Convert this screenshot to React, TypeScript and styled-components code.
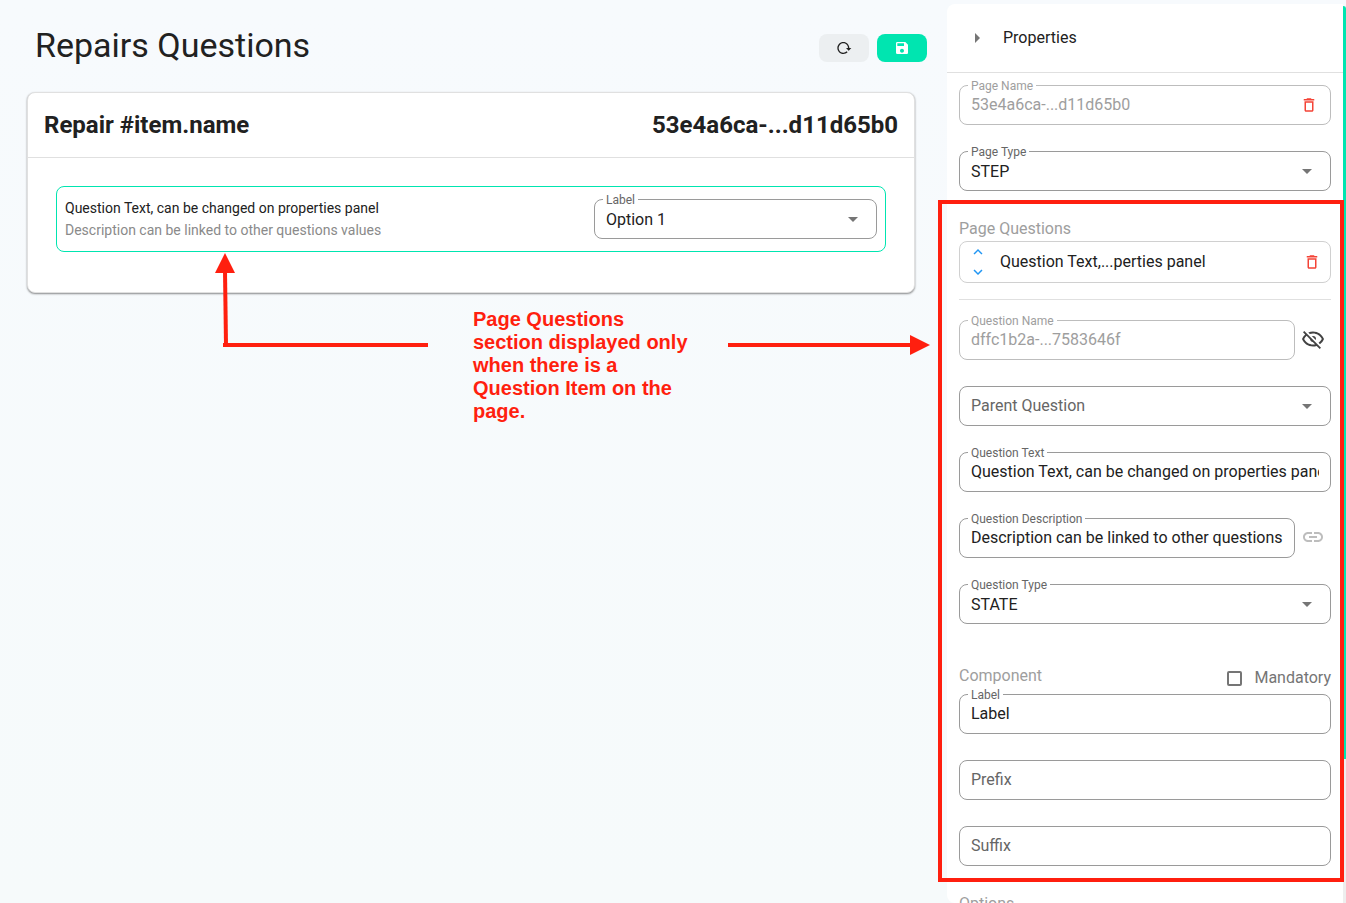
import React from 'react';
import styled, { createGlobalStyle } from 'styled-components';
import { MdSave, MdDeleteOutline, MdLink, MdArrowDropDown, MdArrowRight, MdKeyboardArrowUp, MdKeyboardArrowDown } from 'react-icons/md';

const RED = '#ff1f0f';
const MINT = '#00e5b0';

const GlobalStyle = createGlobalStyle`
  * { box-sizing: border-box; }
  body { margin: 0; color: #212121; font-family: Roboto, sans-serif; font-size: 16px; }
  button, input, select { font: inherit; color: inherit; }
  h1, h2, h3, p { margin: 0; font-weight: 400; }
`;

const Shell = styled.div`
  display: flex;
  height: 100vh;
  overflow: hidden;
  background: linear-gradient(#f7fafd, #f6fafb);
`;

const Main = styled.main`
  position: relative;
  flex: 1;
  min-width: 0;
  padding: 24px 20px 0 27px;
`;

const TitleRow = styled.header`
  display: flex;
  justify-content: space-between;
  align-items: flex-start;
  height: 68px;
  padding-left: 8px;
`;

const Title = styled.h1`
  font-size: 34px;
  line-height: 42px;
`;

const Actions = styled.div`
  display: flex;
  gap: 8px;
  padding-top: 10px;
`;

const ActionButton = styled.button<{ $primary?: boolean }>`
  display: flex;
  align-items: center;
  justify-content: center;
  width: 50px;
  height: 28px;
  padding: 0;
  border: 0;
  border-radius: 8px;
  background: ${(p) => (p.$primary ? MINT : '#eceff1')};
  color: ${(p) => (p.$primary ? '#fff' : '#212121')};
`;

const Card = styled.section`
  margin-right: 12px;
  border: 1px solid #e0e0e0;
  border-radius: 8px;
  background: #fff;
  box-shadow: 0 1px 2px rgba(0, 0, 0, 0.45);
`;

const CardHeader = styled.div`
  display: flex;
  justify-content: space-between;
  padding: 16px;
  border-bottom: 1px solid #e0e0e0;
`;

const CardTitle = styled.h2`
  font-size: 24px;
  line-height: 32px;
  font-weight: 700;
`;

const CardBody = styled.div`
  padding: 28px 28px 40px;
`;

const QuestionItem = styled.div`
  display: flex;
  justify-content: space-between;
  align-items: center;
  height: 66px;
  padding: 0 8px;
  border: 1px solid ${MINT};
  border-radius: 8px;
`;

const QuestionCopy = styled.div`
  font-size: 14px;
  line-height: 22px;
`;

const QuestionHint = styled.p`
  color: #8a8a8a;
`;

const QuestionControl = styled.div`
  width: 283px;
`;

const FieldBox = styled.div`
  position: relative;
  flex: 1;
  min-width: 0;
  height: 40px;
`;

const FieldLabel = styled.label<{ $muted?: boolean }>`
  position: absolute;
  top: -6px;
  left: 9px;
  padding: 0 3px;
  background: #fff;
  color: ${(p) => (p.$muted ? '#9e9e9e' : '#666')};
  font-size: 12px;
  line-height: 14px;
`;

const TextBox = styled.input`
  display: block;
  width: 100%;
  height: 40px;
  padding: 0 11px 2px;
  border: 1px solid #9a9a9a;
  border-radius: 8px;
  background: #fff;
  outline: none;
  &::placeholder { color: #666; opacity: 1; }
  &:disabled { border-color: #bdbdbd; color: #9e9e9e; }
`;

const SelectBox = styled.select<{ $empty?: boolean }>`
  display: block;
  width: 100%;
  height: 40px;
  padding: ${(p) => (p.$empty ? '0 36px 2px 11px' : '0 36px 0 11px')};
  border: 1px solid #9a9a9a;
  border-radius: 8px;
  background: #fff;
  appearance: none;
  outline: none;
  color: ${(p) => (p.$empty ? '#666' : '#212121')};
`;

const Adornment = styled.span`
  position: absolute;
  top: 8px;
  right: 12px;
  display: flex;
  color: #757575;
  pointer-events: none;
`;

const IconButton = styled.button<{ $color: string }>`
  display: flex;
  align-items: center;
  justify-content: center;
  padding: 0;
  border: 0;
  background: none;
  color: ${(p) => p.$color};
`;

const FieldAction = styled.div`
  position: absolute;
  top: 11px;
  right: 13px;
`;

const Panel = styled.aside`
  display: flex;
  flex-direction: column;
  width: 396px;
  margin-top: 4px;
  border-radius: 8px 0 0 8px;
  background: #fff;
`;

const PanelHeader = styled.div`
  display: flex;
  align-items: center;
  gap: 14px;
  flex: none;
  height: 69px;
  padding-left: 18px;
  border-bottom: 1px solid #e0e0e0;
`;

const PanelTitle = styled.h2`
  font-size: 16px;
  line-height: 24px;
`;

const PanelBody = styled.div`
  display: flex;
  flex-direction: column;
  padding: 12px 12px 0;
`;

const Stack = styled.div`
  display: flex;
  flex-direction: column;
  gap: 26px;
`;

const FieldRow = styled.div`
  display: flex;
  align-items: center;
  gap: 6px;
  padding-right: 6px;
  & > button { padding-bottom: 3px; }
`;

const HighlightedSection = styled.section`
  position: relative;
  margin-top: 28px;
  &::after {
    content: '';
    position: absolute;
    inset: -19px -13px -16px -21px;
    border: 4px solid ${RED};
    pointer-events: none;
  }
`;

const SectionTitle = styled.h3`
  color: #9e9e9e;
  font-size: 16px;
  line-height: 20px;
`;

const QuestionRow = styled.div`
  display: flex;
  align-items: center;
  height: 42px;
  margin-top: 2px;
  padding: 0 9px;
  border: 1px solid #d0d0d0;
  border-radius: 8px;
`;

const OrderButtons = styled.div`
  display: flex;
  flex-direction: column;
  align-items: flex-start;
  gap: 2px;
  width: 31px;
`;

const QuestionName = styled.span`
  flex: 1;
  padding-bottom: 1px;
`;

const Divider = styled.hr`
  width: 100%;
  margin: 16px 0 20px;
  border: 0;
  border-top: 1px solid #e0e0e0;
`;

const ComponentHeader = styled.div`
  display: flex;
  justify-content: space-between;
  align-items: flex-start;
  margin: 42px 0 6px;
`;

const CheckLabel = styled.label`
  display: flex;
  align-items: center;
  gap: 12px;
  padding-top: 2px;
  color: #757575;
  line-height: 20px;
`;

const CheckBox = styled.input`
  appearance: none;
  width: 15px;
  height: 15px;
  margin: 0;
  border: 2px solid #757575;
  border-radius: 2px;
`;

const NextSection = styled.div`
  margin-top: 28px;
`;

const ScrollTrack = styled.div`
  display: flex;
  width: 3px;
  flex: none;
  flex-direction: column;
  margin-top: 6px;
  background: #eee;
`;

const ScrollThumb = styled.div`
  height: 84%;
  border-radius: 0 3px 0 0;
  background: ${MINT};
`;

const Annotation = styled.div`
  position: absolute;
  top: 253px;
  left: 215px;
  display: flex;
  align-items: flex-start;
  color: ${RED};
  pointer-events: none;
`;

const AnnotationText = styled.p`
  width: 220px;
  margin: 55px 35px 0 45px;
  font-family: 'Liberation Sans', Arial, sans-serif;
  font-size: 20px;
  line-height: 23px;
  font-weight: 700;
`;

const ArrowRight = styled.svg`
  flex: none;
  margin-top: 81px;
`;

function ReloadIcon() {
  return (
    <svg width="16" height="16" viewBox="0 0 24 24" fill="currentColor" aria-hidden="true">
      <path d="M2 12C2 16.97 6.03 21 11 21C13.39 21 15.68 20.06 17.4 18.4L15.9 16.9C14.63 18.25 12.86 19 11 19C4.76 19 1.64 11.46 6.05 7.05C10.46 2.64 18 5.77 18 12H15L19 16H19.1L23 12H20C20 7.03 15.97 3 11 3C6.03 3 2 7.03 2 12Z" />
    </svg>
  );
}

function EyeOffIcon() {
  return (
    <svg width="24" height="24" viewBox="0 0 24 24" fill="currentColor" aria-hidden="true">
      <path d="M2,5.27L3.28,4L20,20.72L18.73,22L15.65,18.92C14.5,19.3 13.28,19.5 12,19.5C7,19.5 2.73,16.39 1,12C1.69,10.24 2.79,8.69 4.19,7.46L2,5.27M12,9A3,3 0 0,1 15,12C15,12.35 14.94,12.69 14.83,13L11,9.17C11.31,9.06 11.65,9 12,9M12,4.5C17,4.5 21.27,7.61 23,12C22.18,14.08 20.79,15.88 19,17.19L17.58,15.76C18.94,14.82 20.06,13.54 20.82,12C19.17,8.64 15.76,6.5 12,6.5C10.91,6.5 9.84,6.68 8.84,7L7.3,5.47C8.74,4.85 10.33,4.5 12,4.5M3.18,12C4.83,15.36 8.24,17.5 12,17.5C12.69,17.5 13.37,17.43 14,17.29L11.72,15C10.29,14.85 9.15,13.71 9,12.28L5.6,8.87C4.61,9.72 3.78,10.78 3.18,12Z" />
    </svg>
  );
}

type FieldProps = { id: string; label: string; value?: string; disabled?: boolean; children?: React.ReactNode };

function TextField({ id, label, value, disabled, children }: FieldProps) {
  return (
    <FieldBox>
      <TextBox id={id} defaultValue={value} disabled={disabled} placeholder={value ? undefined : label} aria-label={label} />
      {value && <FieldLabel htmlFor={id} $muted={disabled}>{label}</FieldLabel>}
      {children}
    </FieldBox>
  );
}

function SelectField({ id, label, value }: FieldProps) {
  return (
    <FieldBox>
      <SelectBox id={id} $empty={!value} aria-label={label}>
        <option>{value ?? label}</option>
      </SelectBox>
      {value && <FieldLabel htmlFor={id}>{label}</FieldLabel>}
      <Adornment><MdArrowDropDown size={24} /></Adornment>
    </FieldBox>
  );
}

export default function App() {
  return (
    <Shell>
      <GlobalStyle />
      <Main>
        <TitleRow>
          <Title>Repairs Questions</Title>
          <Actions>
            <ActionButton type="button" aria-label="Reload"><ReloadIcon /></ActionButton>
            <ActionButton type="button" $primary aria-label="Save"><MdSave size={16} /></ActionButton>
          </Actions>
        </TitleRow>
        <Card>
          <CardHeader>
            <CardTitle>Repair #item.name</CardTitle>
            <CardTitle>53e4a6ca-...d11d65b0</CardTitle>
          </CardHeader>
          <CardBody>
            <QuestionItem>
              <QuestionCopy>
                <p>Question Text, can be changed on properties panel</p>
                <QuestionHint>Description can be linked to other questions values</QuestionHint>
              </QuestionCopy>
              <QuestionControl>
                <SelectField id="preview" label="Label" value="Option 1" />
              </QuestionControl>
            </QuestionItem>
          </CardBody>
        </Card>
        <Annotation>
          <svg width="213" height="95" viewBox="0 0 213 95" aria-hidden="true">
            <path d="M10 18L11 92" fill="none" stroke="currentColor" strokeWidth="4" />
            <path d="M8 92H213" fill="none" stroke="currentColor" strokeWidth="4" />
            <path d="M10 0L20 20H0z" fill="currentColor" />
          </svg>
          <AnnotationText>Page Questions section displayed only when there is a Question Item on the page.</AnnotationText>
          <ArrowRight width="202" height="22" viewBox="0 0 202 22" aria-hidden="true">
            <path d="M0 11H184" stroke="currentColor" strokeWidth="4" />
            <path d="M182 1L202 11L182 21z" fill="currentColor" />
          </ArrowRight>
        </Annotation>
      </Main>
      <Panel>
        <PanelHeader>
          <IconButton type="button" $color="#757575" aria-label="Collapse properties"><MdArrowRight size={24} /></IconButton>
          <PanelTitle>Properties</PanelTitle>
        </PanelHeader>
        <PanelBody>
          <Stack>
            <TextField id="page-name" label="Page Name" value="53e4a6ca-...d11d65b0" disabled>
              <FieldAction>
                <IconButton type="button" $color="#f44336" aria-label="Delete page"><MdDeleteOutline size={18} /></IconButton>
              </FieldAction>
            </TextField>
            <SelectField id="page-type" label="Page Type" value="STEP" />
          </Stack>
          <HighlightedSection>
            <SectionTitle>Page Questions</SectionTitle>
            <QuestionRow>
              <OrderButtons>
                <IconButton type="button" $color="#2196f3" aria-label="Move up"><MdKeyboardArrowUp size={18} /></IconButton>
                <IconButton type="button" $color="#2196f3" aria-label="Move down"><MdKeyboardArrowDown size={18} /></IconButton>
              </OrderButtons>
              <QuestionName>Question Text,...perties panel</QuestionName>
              <IconButton type="button" $color="#f44336" aria-label="Delete question"><MdDeleteOutline size={18} /></IconButton>
            </QuestionRow>
            <Divider />
            <Stack>
              <FieldRow>
                <TextField id="question-name" label="Question Name" value="dffc1b2a-...7583646f" disabled />
                <IconButton type="button" $color="#424242" aria-label="Toggle visibility"><EyeOffIcon /></IconButton>
              </FieldRow>
              <SelectField id="parent-question" label="Parent Question" />
              <TextField id="question-text" label="Question Text" value="Question Text, can be changed on properties panel" />
              <FieldRow>
                <TextField id="question-description" label="Question Description" value="Description can be linked to other questions values" />
                <IconButton type="button" $color="#bdbdbd" aria-label="Link description"><MdLink size={24} /></IconButton>
              </FieldRow>
              <SelectField id="question-type" label="Question Type" value="STATE" />
            </Stack>
            <ComponentHeader>
              <SectionTitle>Component</SectionTitle>
              <CheckLabel><CheckBox type="checkbox" />Mandatory</CheckLabel>
            </ComponentHeader>
            <Stack>
              <TextField id="label" label="Label" value="Label" />
              <TextField id="prefix" label="Prefix" />
              <TextField id="suffix" label="Suffix" />
            </Stack>
          </HighlightedSection>
          <NextSection><SectionTitle>Options</SectionTitle></NextSection>
        </PanelBody>
      </Panel>
      <ScrollTrack><ScrollThumb /></ScrollTrack>
    </Shell>
  );
}
